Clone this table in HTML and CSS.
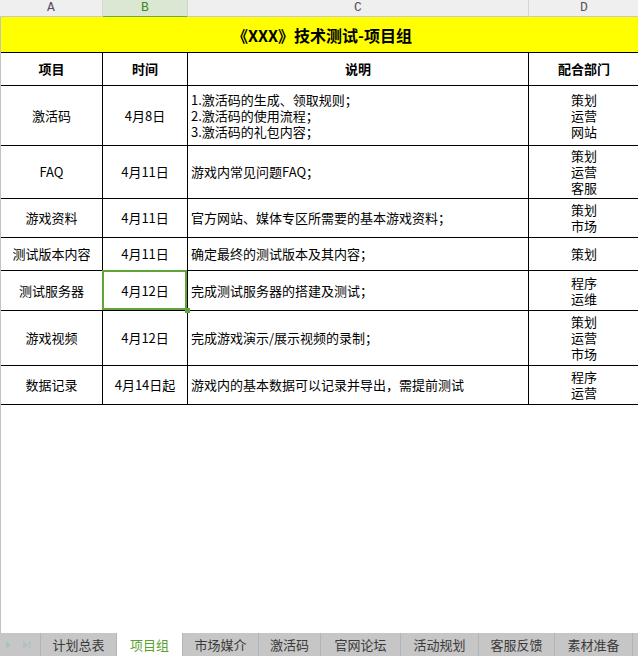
FILE: index.html
```html
<!DOCTYPE html>
<html lang="zh">
<head>
<meta charset="utf-8">
<title>《XXX》技术测试-项目组</title>
<link rel="stylesheet" href="styles.css">
</head>
<body>
<div class="sheet">
  <div class="colheads">
    <div class="colhead">A</div>
    <div class="colhead sel">B</div>
    <div class="colhead">C</div>
    <div class="colhead last">D</div>
  </div>
  <div class="grid-area">
    <div class="grid">
      <div class="cell title">《XXX》技术测试-项目组</div>

      <div class="cell head">项目</div>
      <div class="cell head">时间</div>
      <div class="cell head">说明</div>
      <div class="cell head last">配合部门</div>

      <div class="cell c">激活码</div>
      <div class="cell c">4月8日</div>
      <div class="cell l">1.激活码的生成、领取规则；<br>2.激活码的使用流程；<br>3.激活码的礼包内容；</div>
      <div class="cell c last">策划<br>运营<br>网站</div>

      <div class="cell c">FAQ</div>
      <div class="cell c">4月11日</div>
      <div class="cell l">游戏内常见问题FAQ；</div>
      <div class="cell c last">策划<br>运营<br>客服</div>

      <div class="cell c">游戏资料</div>
      <div class="cell c">4月11日</div>
      <div class="cell l">官方网站、媒体专区所需要的基本游戏资料；</div>
      <div class="cell c last">策划<br>市场</div>

      <div class="cell c">测试版本内容</div>
      <div class="cell c">4月11日</div>
      <div class="cell l">确定最终的测试版本及其内容；</div>
      <div class="cell c last">策划</div>

      <div class="cell c rowsel">测试服务器</div>
      <div class="cell c active">4月12日</div>
      <div class="cell l">完成测试服务器的搭建及测试；</div>
      <div class="cell c last">程序<br>运维</div>

      <div class="cell c">游戏视频</div>
      <div class="cell c">4月12日</div>
      <div class="cell l">完成游戏演示/展示视频的录制；</div>
      <div class="cell c last">策划<br>运营<br>市场</div>

      <div class="cell c">数据记录</div>
      <div class="cell c">4月14日起</div>
      <div class="cell l">游戏内的基本数据可以记录并导出，需提前测试</div>
      <div class="cell c last">程序<br>运营</div>
    </div>
  </div>
  <div class="tabbar">
    <div class="nav">
      <svg width="10" height="10" viewBox="0 0 10 10"><path d="M2 1 L7 5 L2 9 Z" fill="#a9c2c4"/></svg>
      <svg width="12" height="10" viewBox="0 0 12 10"><path d="M2 1 L7 5 L2 9 Z" fill="#a9c2c4"/><rect x="8" y="1" width="1.5" height="8" fill="#a9c2c4"/></svg>
    </div>
    <div class="tab w76">计划总表</div>
    <div class="tab active w66">项目组</div>
    <div class="tab w76">市场媒介</div>
    <div class="tab w62">激活码</div>
    <div class="tab w80">官网论坛</div>
    <div class="tab w78">活动规划</div>
    <div class="tab w76">客服反馈</div>
    <div class="tab w78">素材准备</div>
  </div>
</div>
</body>
</html>
```

FILE: styles.css
```css
* { box-sizing: border-box; }
html, body { margin: 0; padding: 0; background: #fff; }
body {
  width: 638px;
  height: 656px;
  overflow: hidden;
  font-family: "Noto Sans CJK SC", "Noto Sans", sans-serif;
  font-size: 13px;
  color: #000;
}
.sheet {
  display: flex;
  flex-direction: column;
  height: 656px;
  width: 638px;
  overflow: hidden;
}
.colheads {
  display: grid;
  grid-template-columns: 103px 85px 341px 110px;
  height: 17px;
  background: #efefef;
  border-bottom: 1px solid #c9c9c9;
  flex: none;
}
.colhead {
  font-family: "Liberation Mono", "DejaVu Sans Mono", monospace;
  font-size: 13px;
  color: #5e4e5e;
  text-align: center;
  line-height: 16px;
  border-right: 1px solid #d6d6d6;
}
.colhead.sel {
  background: #d9e7d3;
  color: #3a8a1e;
  border-bottom: 2px solid #6aaa45;
  line-height: 16px;
  border-right-color: #c8d6c2;
}
.colhead.last { border-right: none; }

.grid-area {
  flex: 1;
  border-left: 1px solid #c2c2c2;
  overflow: hidden;
}
.grid {
  display: grid;
  grid-template-columns: 102px 85px 341px 110px;
  grid-template-rows: 36px 33px 60px 53px 39px 33px 40px 55px 39px;
}
.cell {
  border-right: 1px solid #000;
  border-bottom: 1px solid #000;
  display: flex;
  align-items: center;
  line-height: 16px;
  position: relative;
}
.cell.last { border-right: none; }
.cell.c { justify-content: center; text-align: center; }
.cell.l { padding-left: 3px; text-align: left; }
.cell.head { justify-content: center; font-weight: bold; }
.cell.title {
  grid-column: 1 / 5;
  background: #ffff00;
  justify-content: center;
  font-weight: bold;
  font-size: 16px;
  border-right: none;
  padding-left: 4px;
}
.cell.rowsel::before {
  content: "";
  position: absolute;
  left: -1px;
  top: 0;
  bottom: 0;
  width: 1px;
  background: #6aaa45;
}
.cell.active::after {
  content: "";
  position: absolute;
  left: -1px;
  top: -1px;
  right: 0;
  bottom: 0;
  border: 2px solid #62a43a;
}
.cell.active::before {
  content: "";
  position: absolute;
  right: -3px;
  bottom: -3px;
  width: 5px;
  height: 5px;
  background: #62a43a;
  z-index: 2;
}

.tabbar {
  flex: none;
  height: 23px;
  display: flex;
  background: #c6c6c6;
  font-size: 13px;
  color: #3a3a3a;
}
.nav {
  width: 41px;
  display: flex;
  align-items: center;
  gap: 7px;
  padding-left: 4px;
  border-right: 1px solid #b4b4b4;
}
.tab {
  display: flex;
  align-items: center;
  justify-content: center;
  border-right: 1px solid #b4b4b4;
  line-height: 23px;
}
.tab.active {
  background: #ffffff;
  color: #5ba02e;
}
.w62 { width: 62px; }
.w66 { width: 66px; }
.w76 { width: 76px; }
.w78 { width: 78px; }
.w80 { width: 80px; }
```
